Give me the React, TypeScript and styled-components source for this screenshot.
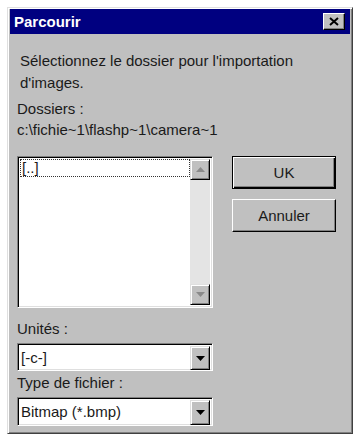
import React from "react";
import styled, { createGlobalStyle } from "styled-components";

const Global = createGlobalStyle`
  html, body { margin: 0; padding: 0; background: #ffffff; }
  body { font-family: "Liberation Sans", Arial, sans-serif; }
`;

const Page = styled.div`
  padding: 7px 0 0 7px;
`;

const Window = styled.div`
  width: 346px;
  height: 427px;
  box-sizing: border-box;
  background: #c0c0c0;
  border: 1px solid;
  border-color: #dfdfdf #404040 #404040 #dfdfdf;
  box-shadow: inset 1px 1px 0 #ffffff, inset -1px -1px 0 #808080;
  padding: 1px 2px;
  display: flex;
  flex-direction: column;
  color: #1a1a1a;
`;

const TitleBar = styled.div`
  height: 25px;
  background: #000080;
  display: flex;
  align-items: center;
  justify-content: space-between;
  padding: 0 5px 0 4px;
`;

const Title = styled.span`
  color: #ffffff;
  font-weight: bold;
  font-size: 15px;
`;

const CloseButton = styled.div`
  width: 22px;
  height: 17px;
  box-sizing: border-box;
  background: #c0c0c0;
  border: 1px solid;
  border-color: #ffffff #000000 #000000 #ffffff;
  box-shadow: inset -1px -1px 0 #808080;
  display: flex;
  align-items: center;
  justify-content: center;
`;

const Body = styled.div`
  display: flex;
  flex-direction: column;
  padding: 0 14px 0 7px;
  font-size: 15px;
`;

const Prompt = styled.div`
  margin: 16px 0 0 3px;
  line-height: 22px;
`;

const Label = styled.div<{ $top: number }>`
  margin-top: ${(p) => p.$top}px;
  line-height: 21px;
  height: 21px;
`;

const Row = styled.div`
  display: flex;
  margin-top: 16px;
  gap: 19px;
`;

const Sunken = styled.div`
  box-sizing: border-box;
  background: #ffffff;
  border: 1px solid;
  border-color: #808080 #ffffff #ffffff #808080;
  box-shadow: inset 1px 1px 0 #000000, inset -1px -1px 0 #dfdfdf;
  padding: 2px;
  display: flex;
`;

const ListBox = styled(Sunken)`
  width: 196px;
  height: 152px;
`;

const ListItems = styled.div`
  flex: 1;
`;

const ListItem = styled.div`
  height: 16px;
  line-height: 16px;
  border: 1px dotted #333;
  padding-left: 1px;
`;

const ScrollBar = styled.div`
  width: 20px;
  display: flex;
  flex-direction: column;
  justify-content: space-between;
  background: #e4e4e4;
`;

const ArrowButton = styled.div<{ $h: number }>`
  height: ${(p) => p.$h}px;
  box-sizing: border-box;
  background: #c0c0c0;
  border: 1px solid;
  border-color: #dfdfdf #000000 #000000 #dfdfdf;
  box-shadow: inset 1px 1px 0 #ffffff, inset -1px -1px 0 #808080;
  display: flex;
  align-items: center;
  justify-content: center;
`;

const ButtonColumn = styled.div`
  display: flex;
  flex-direction: column;
  gap: 10px;
`;

const PushButton = styled.div<{ $default?: boolean }>`
  width: 104px;
  height: 33px;
  box-sizing: border-box;
  background: #c0c0c0;
  border: 1px solid;
  border-color: ${(p) =>
    p.$default ? "#000000" : "#ffffff #000000 #000000 #ffffff"};
  box-shadow: ${(p) =>
    p.$default
      ? "inset 1px 1px 0 #ffffff, inset -1px -1px 0 #000000, inset -2px -2px 0 #808080"
      : "inset -1px -1px 0 #808080"};
  display: flex;
  align-items: center;
  justify-content: center;
`;

const Combo = styled(Sunken)<{ $h: number }>`
  width: 196px;
  height: ${(p) => p.$h}px;
  margin-top: 4px;
  align-items: stretch;
`;

const ComboText = styled.div`
  flex: 1;
  display: flex;
  align-items: center;
  padding-left: 1px;
`;

const DropButton = styled(ArrowButton)`
  width: 20px;
`;

const Tri = ({ up, color }: { up?: boolean; color: string }) => (
  <svg width="9" height="5" viewBox="0 0 9 5">
    {up ? (
      <polygon points="4.5,0 9,5 0,5" fill={color} />
    ) : (
      <polygon points="0,0 9,0 4.5,5" fill={color} />
    )}
  </svg>
);

export default function App() {
  return (
    <Page>
      <Global />
      <Window>
        <TitleBar>
          <Title>Parcourir</Title>
          <CloseButton>
            <svg width="10" height="9" viewBox="0 0 10 9">
              <path d="M1 1 L9 8 M9 1 L1 8" stroke="#000" strokeWidth="2" />
            </svg>
          </CloseButton>
        </TitleBar>
        <Body>
          <Prompt>
            Sélectionnez le dossier pour l'importation
            <br />
            d'images.
          </Prompt>
          <Label $top={4}>Dossiers :</Label>
          <Label $top={0}>{"c:\\fichie~1\\flashp~1\\camera~1"}</Label>
          <Row>
            <ListBox>
              <ListItems>
                <ListItem>[..]</ListItem>
              </ListItems>
              <ScrollBar>
                <ArrowButton $h={21}>
                  <Tri up color="#8a8a8a" />
                </ArrowButton>
                <ArrowButton $h={21}>
                  <Tri color="#8a8a8a" />
                </ArrowButton>
              </ScrollBar>
            </ListBox>
            <ButtonColumn>
              <PushButton $default>UK</PushButton>
              <PushButton>Annuler</PushButton>
            </ButtonColumn>
          </Row>
          <Label $top={10}>Unités :</Label>
          <Combo $h={28}>
            <ComboText>[-c-]</ComboText>
            <DropButton $h={24}>
              <Tri color="#000" />
            </DropButton>
          </Combo>
          <Label $top={1}>Type de fichier :</Label>
          <Combo $h={29}>
            <ComboText>Bitmap (*.bmp)</ComboText>
            <DropButton $h={25}>
              <Tri color="#000" />
            </DropButton>
          </Combo>
        </Body>
      </Window>
    </Page>
  );
}
